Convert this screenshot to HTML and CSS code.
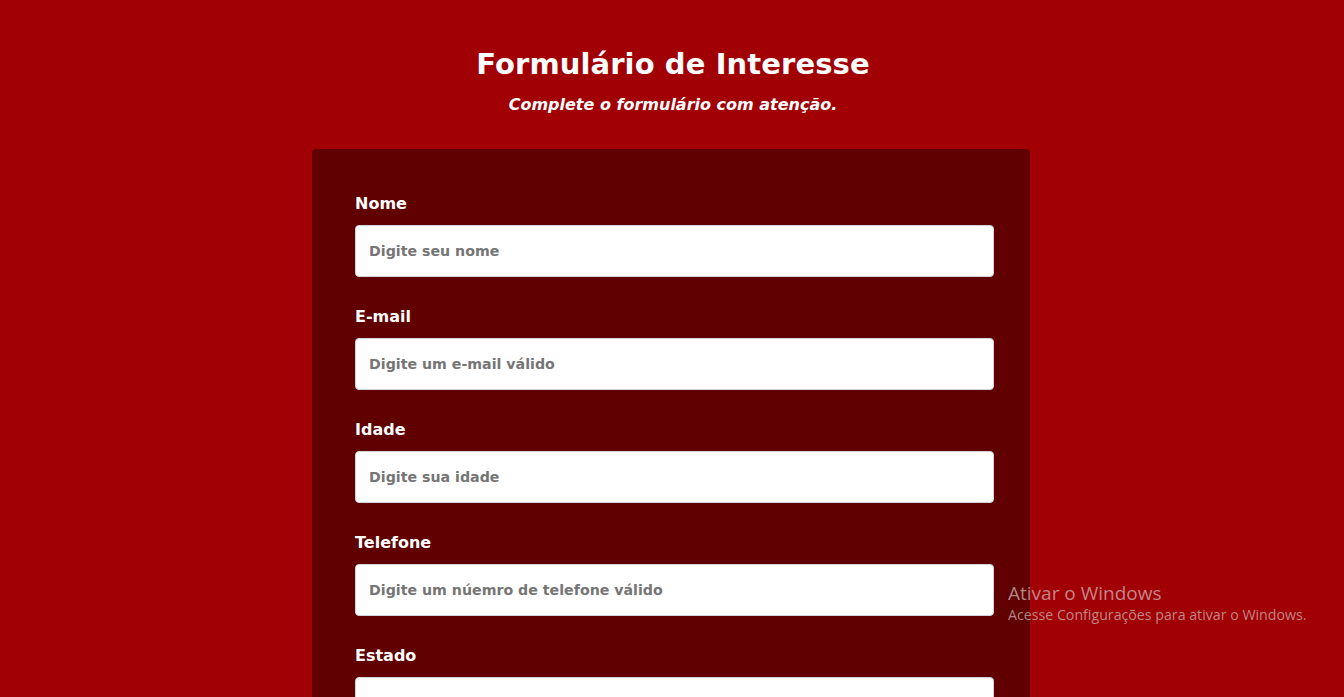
FILE: index.html
```html
<!DOCTYPE html>
<html lang="pt-BR">
<head>
<meta charset="utf-8">
<title>Formulário de Interesse</title>
<link rel="stylesheet" href="styles.css">
</head>
<body>
<header class="header">
  <h1 class="title">Formulário de Interesse</h1>
  <p class="subtitle">Complete o formulário com atenção.</p>
</header>
<main class="card">
  <form class="form">
    <div class="field">
      <label class="label" for="nome">Nome</label>
      <input class="input" id="nome" type="text" placeholder="Digite seu nome">
    </div>
    <div class="field">
      <label class="label" for="email">E-mail</label>
      <input class="input" id="email" type="email" placeholder="Digite um e-mail válido">
    </div>
    <div class="field">
      <label class="label" for="idade">Idade</label>
      <input class="input" id="idade" type="text" placeholder="Digite sua idade">
    </div>
    <div class="field">
      <label class="label" for="tel">Telefone</label>
      <input class="input" id="tel" type="text" placeholder="Digite um núemro de telefone válido">
    </div>
    <div class="field">
      <label class="label" for="estado">Estado</label>
      <input class="input" id="estado" type="text">
    </div>
  </form>
</main>
<div class="watermark">
  <div class="wm-title">Ativar o Windows</div>
  <div class="wm-sub">Acesse Configurações para ativar o Windows.</div>
</div>
</body>
</html>
```
FILE: styles.css
```css
html, body {
  margin: 0;
  padding: 0;
  height: 100%;
  overflow: hidden;
}
body {
  background: #a10005;
  font-family: "DejaVu Sans", "Liberation Sans", sans-serif;
  color: #ffffff;
}
.header {
  text-align: center;
  padding-top: 44px;
  padding-left: 2px;
}
.title {
  margin: 0;
  font-size: 29px;
  font-weight: bold;
  line-height: 40px;
  letter-spacing: 0.1px;
}
.subtitle {
  margin: 10px 0 0 0;
  font-size: 16px;
  font-weight: bold;
  font-style: italic;
  line-height: 22px;
}
.card {
  width: 718px;
  margin: 33px auto 0 auto;
  position: relative;
  left: -1px;
  background: #600000;
  border-radius: 4px;
  box-sizing: border-box;
  padding: 42px 36px 40px 43px;
  min-height: 600px;
}
.form {
  display: flex;
  flex-direction: column;
  gap: 27px;
}
.field {
  display: flex;
  flex-direction: column;
  gap: 9px;
}
.label {
  font-size: 16px;
  font-weight: bold;
  line-height: 25px;
  color: #ffffff;
}
.input {
  height: 52px;
  box-sizing: border-box;
  border: 1px solid #ced4da;
  border-radius: 4px;
  background: #ffffff;
  padding: 0 13px;
  font-family: "DejaVu Sans", "Liberation Sans", sans-serif;
  font-size: 14.2px;
  font-weight: bold;
  color: #333;
  width: 100%;
}
.input::placeholder {
  color: #757575;
  opacity: 1;
}
.watermark {
  position: absolute;
  left: 1008px;
  top: 581px;
  font-family: "Open Sans", "Noto Sans", sans-serif;
  color: rgba(205, 180, 180, 0.75);
}
.wm-title {
  font-size: 19px;
  line-height: 24px;
}
.wm-sub {
  font-size: 14.2px;
  line-height: 20px;
}
```
